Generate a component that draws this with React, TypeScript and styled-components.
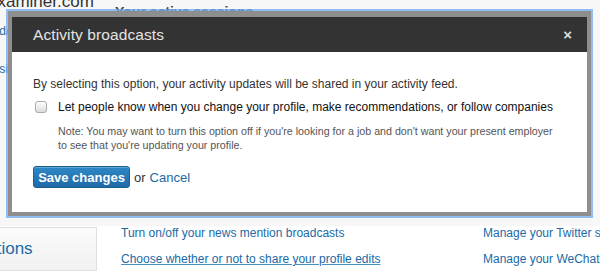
import styled, {createGlobalStyle} from "styled-components";

const GlobalStyle = createGlobalStyle`
  html, body {
    margin: 0;
    padding: 0;
    background: #f7f7f7;
    font-family: "Liberation Sans", Arial, sans-serif;
  }
`;

const Page = styled.div`
  position: relative;
  width: 600px;
  height: 272px;
  overflow: hidden;
  background: #f7f7f7;
`;

const TopArea = styled.div`
  height: 226px;
  display: flex;
  flex-direction: column;
`;

const SiteName = styled.div`
  margin: -7px 0 0 -12px;
  font-size: 17px;
  line-height: 18px;
  color: #333;
`;

const SessionsHeading = styled.div`
  margin: -8px 0 0 115px;
  font-size: 14px;
  font-weight: 700;
  color: #444;
  line-height: 18px;
`;

const SideLink = styled.a<{ $gap: number }>`
  margin: ${p => p.$gap}px 0 0 -14px;
  font-size: 12px;
  line-height: 14px;
  color: #1a6aa6;
  text-decoration: none;
`;

const BottomArea = styled.div`
  display: flex;
  background: #fff;
  height: 46px;
`;

const NavBox = styled.div`
  flex-shrink: 0;
  width: 96px;
  margin-top: 1px;
  height: 42px;
  border: 1px solid #e0e0e0;
  border-left: none;
  background: linear-gradient(#fbfbfb, #f1f1f1);
  display: flex;
  align-items: center;
  overflow: hidden;
`;

const NavTitle = styled.span`
  margin-left: -60px;
  font-size: 17px;
  color: #1a6aa6;
  white-space: nowrap;
`;

const LinkColumn = styled.div<{ $width: number; $offset?: number }>`
  flex-shrink: 0;
  width: ${p => p.$width}px;
  margin-left: ${p => p.$offset ?? 0}px;
  display: flex;
  flex-direction: column;
  gap: 12px;
  white-space: nowrap;
`;

const PageLink = styled.a<{ $under?: boolean }>`
  font-size: 12px;
  line-height: 14px;
  color: #1a6aa6;
  text-decoration: ${p => (p.$under ? "underline" : "none")};
  text-decoration-color: #4a8fc2;
`;

const Modal = styled.div`
  position: absolute;
  left: 8px;
  top: 11px;
  width: 575px;
  border: 4px solid rgba(30, 30, 30, 0.5);
  border-top-width: 6px;
  box-shadow: 0 0 0 2px rgba(110, 170, 240, 0.75);
  background: #fff;
`;

const ModalHeader = styled.div`
  height: 35px;
  background: #333;
  display: flex;
  align-items: center;
  justify-content: space-between;
  padding: 0 15px 0 21px;
`;

const ModalTitle = styled.h3`
  margin: 0;
  font-size: 15.5px;
  font-weight: 400;
  color: #e4e4e4;
  letter-spacing: 0.1px;
`;

const CloseButton = styled.span`
  font-size: 15px;
  font-weight: 700;
  color: #ddd;
  line-height: 1;
`;

const ModalBody = styled.div`
  padding: 24px 21px 24px;
  color: #333;
`;

const Intro = styled.p`
  margin: 0;
  font-size: 12px;
  line-height: 16px;
`;

const OptionRow = styled.label`
  margin-top: 7px;
  display: flex;
  align-items: center;
  gap: 11px;
  padding-left: 2px;
  font-size: 12px;
  line-height: 16px;
  color: #111;
  white-space: nowrap;
`;

const Checkbox = styled.span`
  flex-shrink: 0;
  width: 10px;
  height: 10px;
  border: 1px solid #aaa;
  border-radius: 3px;
  background: linear-gradient(#fdfdfd, #dcdcdc);
  box-shadow: inset 0 1px 0 #fff;
`;

const Note = styled.p`
  margin: 9px 0 0 25px;
  font-size: 10.7px;
  line-height: 14px;
  color: #555;
  white-space: nowrap;
`;

const Actions = styled.div`
  margin-top: 14px;
  display: flex;
  align-items: center;
  gap: 4px;
  font-size: 13px;
  color: #333;
`;

const SaveButton = styled.button`
  height: 22px;
  width: 97px;
  padding: 0;
  border: 1px solid #1a5f92;
  border-radius: 3px;
  background: linear-gradient(#2f87c6, #1f6aa6);
  color: #fff;
  font-family: inherit;
  font-size: 13px;
  font-weight: 700;
  box-shadow: inset 0 1px 0 rgba(255, 255, 255, 0.25);
`;

const CancelLink = styled.a`
  color: #1a6aa6;
  text-decoration: none;
`;

export default function App() {
  return (
    <>
      <GlobalStyle/>
      <Page>
        <TopArea>
          <SiteName>examiner.com</SiteName>
          <SessionsHeading>Your active sessions</SessionsHeading>
          <SideLink $gap={3}>add/</SideLink>
          <SideLink $gap={24}>basic</SideLink>
        </TopArea>
        <BottomArea>
          <NavBox><NavTitle>Notifications</NavTitle></NavBox>
          <LinkColumn $width={362} $offset={24}>
            <PageLink>Turn on/off your news mention broadcasts</PageLink>
            <PageLink $under>Choose whether or not to share your profile edits</PageLink>
          </LinkColumn>
          <LinkColumn $width={200}>
            <PageLink>Manage your Twitter settings</PageLink>
            <PageLink>Manage your WeChat settings</PageLink>
          </LinkColumn>
        </BottomArea>

        <Modal>
          <ModalHeader>
            <ModalTitle>Activity broadcasts</ModalTitle>
            <CloseButton>×</CloseButton>
          </ModalHeader>
          <ModalBody>
            <Intro>By selecting this option, your activity updates will be shared in your activity feed.</Intro>
            <OptionRow>
              <Checkbox/>
              Let people know when you change your profile, make recommendations, or follow companies
            </OptionRow>
            <Note>
              Note: You may want to turn this option off if you're looking for a job and don't want your present employer
              <br/>
              to see that you're updating your profile.
            </Note>
            <Actions>
              <SaveButton>Save changes</SaveButton>
              or <CancelLink>Cancel</CancelLink>
            </Actions>
          </ModalBody>
        </Modal>
      </Page>
    </>
  );
}
